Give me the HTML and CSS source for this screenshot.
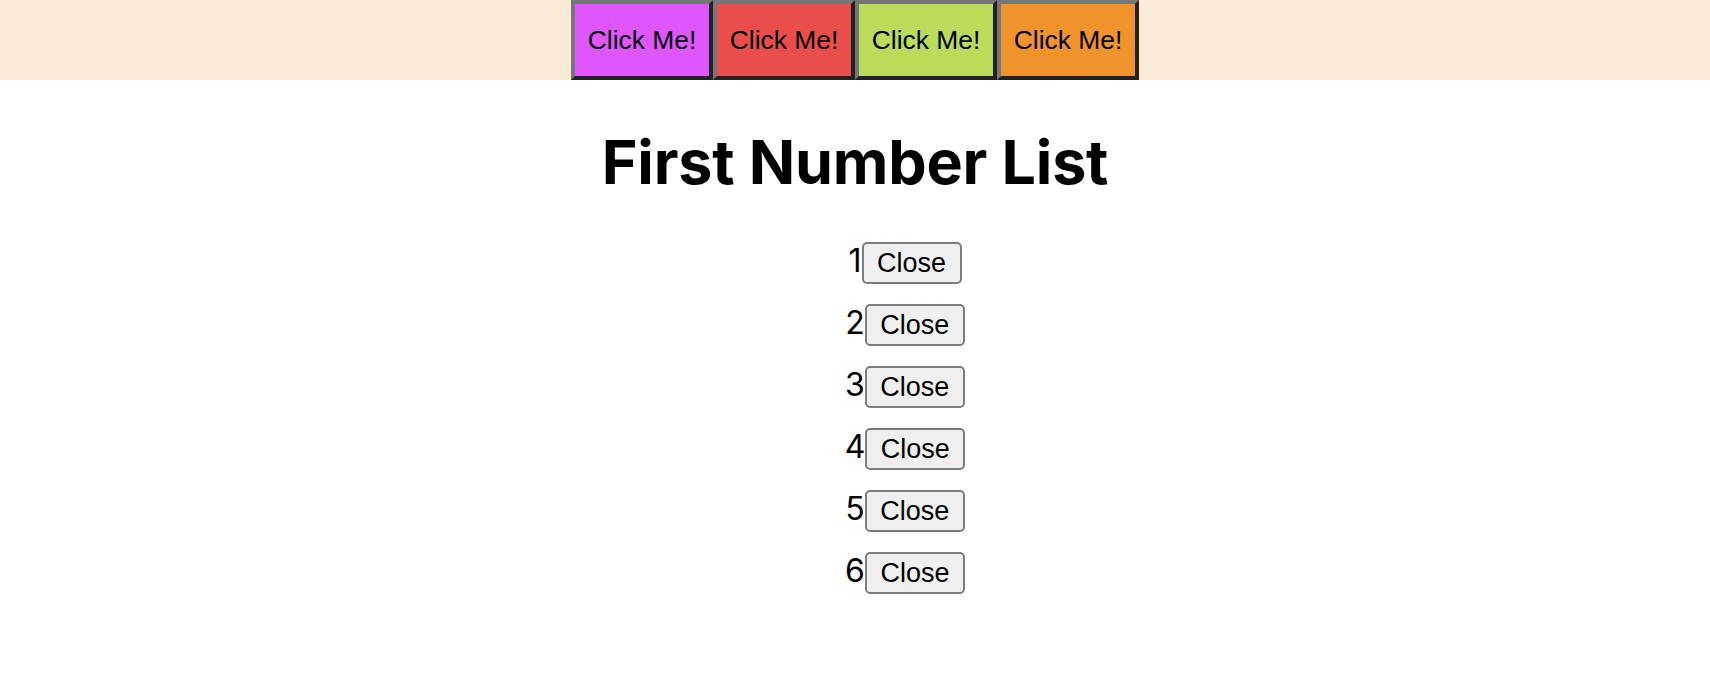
FILE: index.html
```html
<!DOCTYPE html>
<html lang="en">
<head>
<meta charset="utf-8">
<title>First Number List</title>
<link rel="stylesheet" href="styles.css">
</head>
<body>
<header class="topbar">
  <button class="color-btn magenta">Click Me!</button>
  <button class="color-btn red">Click Me!</button>
  <button class="color-btn green">Click Me!</button>
  <button class="color-btn orange">Click Me!</button>
</header>
<main class="content">
  <h1 class="title">First Number List</h1>
  <ul class="list">
    <li class="row"><span class="num">1</span><button class="close-btn">Close</button></li>
    <li class="row"><span class="num">2</span><button class="close-btn">Close</button></li>
    <li class="row"><span class="num">3</span><button class="close-btn">Close</button></li>
    <li class="row"><span class="num">4</span><button class="close-btn">Close</button></li>
    <li class="row"><span class="num">5</span><button class="close-btn">Close</button></li>
    <li class="row"><span class="num">6</span><button class="close-btn">Close</button></li>
  </ul>
</main>
</body>
</html>
```
FILE: styles.css
```css
* { box-sizing: border-box; }
html, body { margin: 0; padding: 0; background: #ffffff; }
body { font-family: Inter, "Liberation Sans", sans-serif; color: #000; }

.topbar {
  display: flex;
  justify-content: center;
  height: 80px;
  background: #faebd7;
}
.color-btn {
  width: 142px;
  height: 80px;
  padding: 0;
  margin: 0;
  font-family: "Liberation Sans", Arial, sans-serif;
  font-size: 26.4px;
  color: #000;
  border-style: solid;
  border-width: 4px;
  border-color: #767676 #222222 #222222 #767676;
  cursor: pointer;
}
.magenta { background: #e056fd; }
.red { background: #eb4d4b; }
.green { background: #badc58; }
.orange { background: #f0932b; }

.content { display: flex; flex-direction: column; padding-bottom: 40px; }
.title {
  margin: 42px 0 0;
  text-align: center;
  font-family: Inter, "Liberation Sans", sans-serif;
  font-weight: 700;
  font-size: 61px;
  line-height: 80px;
  letter-spacing: -0.2px;
}
.list {
  list-style: none;
  margin: 40px 0 0;
  padding: 0;
  display: flex;
  flex-direction: column;
  gap: 20px;
}
.row {
  display: grid;
  grid-template-columns: 1fr auto 1fr;
  align-items: baseline;
}
.num {
  grid-column: 2;
  font-family: Inter, "Liberation Sans", sans-serif;
  font-size: 32px;
  line-height: 36px;
}
.close-btn {
  grid-column: 3;
  justify-self: start;
  width: 100px;
  height: 42px;
  padding: 0;
  font-family: "Liberation Sans", Arial, sans-serif;
  font-size: 27px;
  color: #000;
  background: #efefef;
  border: 2px solid #7d7d7d;
  border-radius: 5px;
}
```
